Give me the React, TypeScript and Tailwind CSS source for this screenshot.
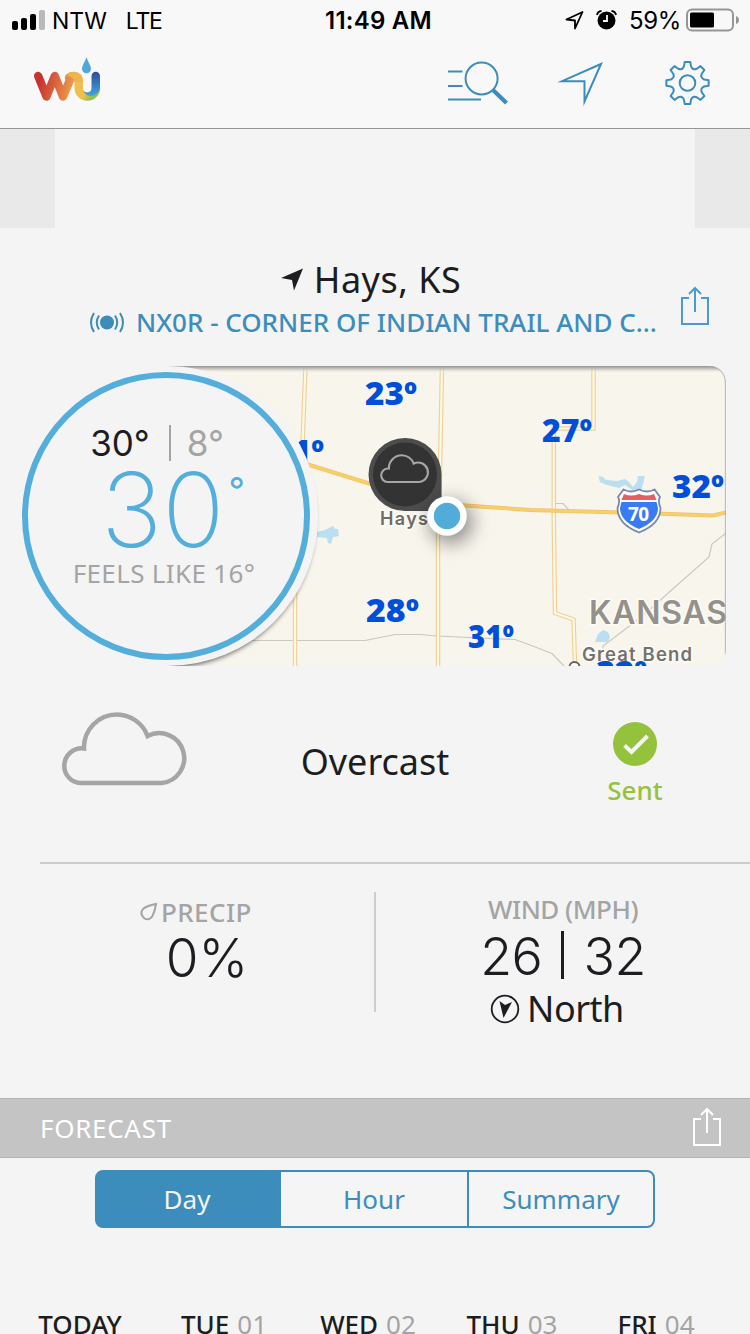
import type { ReactNode } from 'react';

const tabs = ['Day', 'Hour', 'Summary'];

const days = [
  { name: 'TODAY', date: '' },
  { name: 'TUE', date: '01' },
  { name: 'WED', date: '02' },
  { name: 'THU', date: '03' },
  { name: 'FRI', date: '04' },
];

const mapTemps = [
  { label: '1º', x: 292, y: 463, width: 32 },
  { label: '23º', x: 365, y: 404.5, width: 52 },
  { label: '27º', x: 542, y: 441.5, width: 50 },
  { label: '32º', x: 672, y: 497.5, width: 52 },
  { label: '28º', x: 366, y: 621.5, width: 53 },
  { label: '31º', x: 468, y: 647.5, width: 46 },
  { label: '32º', x: 596, y: 683.5, width: 51 },
];

const roads = [
  'M305.5 366L302.5 445L299 530L295 590V666',
  'M442 366L440 470L438 540V666',
  'M593.5 366V428.5H553.8V520L555 613L573.5 619.5L575 664',
];

const CLOUD =
  'M20.5 73H102A25 25 0 1 0 87.6 26A33 33 0 0 0 57 4.5A33 33 0 0 0 24 38.5A17.5 17.5 0 0 0 4.3 56A17 17 0 0 0 20.5 73Z';

function gearPath() {
  const p = (r: number, deg: number) => {
    const a = (deg * Math.PI) / 180;
    return `${(23.5 + r * Math.sin(a)).toFixed(2)} ${(23 - r * Math.cos(a)).toFixed(2)}`;
  };
  let d = '';
  for (let i = 0; i < 8; i++) {
    const a = i * 45;
    d += `${i === 0 ? 'M' : 'L'}${p(21.3, a - 7.5)}L${p(21.3, a + 7.5)}L${p(17, a + 12)}Q${p(13.6, a + 22.5)} ${p(17, a + 33)}`;
  }
  return d + 'Z';
}

function ShareIcon() {
  return (
    <svg className="h-10 w-[30px]" viewBox="0 0 30 40" fill="none" stroke="currentColor" strokeWidth="2">
      <path d="M9 13H2V39H28V13H21M15 27V2.5M9 9L15 3L21 9" />
    </svg>
  );
}

function Logo() {
  return (
    <svg className="h-[46px] w-[68px]" viewBox="33 56 68 46" fill="none">
      <defs>
        <linearGradient id="w" gradientUnits="userSpaceOnUse" x1="36" y1="80" x2="72" y2="88">
          <stop offset="0.1" stopColor="#c8322f" />
          <stop offset="0.55" stopColor="#d96540" />
          <stop offset="1" stopColor="#ec9a4c" />
        </linearGradient>
        <linearGradient id="u" gradientUnits="userSpaceOnUse" x1="66" y1="76" x2="98" y2="98">
          <stop offset="0" stopColor="#e29a3f" />
          <stop offset="0.3" stopColor="#f3bd4c" />
          <stop offset="0.66" stopColor="#efc04a" />
          <stop offset="0.85" stopColor="#8fc152" />
        </linearGradient>
        <linearGradient id="b" gradientUnits="userSpaceOnUse" x1="0" y1="72" x2="0" y2="96">
          <stop offset="0" stopColor="#2a4f9f" />
          <stop offset="1" stopColor="#43a5dd" />
        </linearGradient>
      </defs>
      <path d="M69 77.5Q71 76 74 76Q78.7 76.4 78.7 82V88A8.6 8.6 0 0 0 96 88" stroke="url(#u)" strokeWidth="8.4" strokeLinecap="round" />
      <path d="M38.2 76L46.5 96.5L54.8 76L63 96.5L70 80" stroke="url(#w)" strokeWidth="8.4" strokeLinecap="round" strokeLinejoin="round" />
      <path d="M68 73.5Q70.5 71.8 74 71.8Q82.9 72.5 82.9 82H74.5Q74 77 68 76Z" fill="#efb54a" />
      <path d="M83 89Q83.5 92.5 87.5 92.5Q91.5 92 91.5 88V76A4.2 4.2 0 0 1 100 76V88Q98 95.5 91 96Q84 95.5 83 89Z" fill="url(#b)" />
      <path d="M86.5 57C88 62 91 65.5 91 69A4.5 4.2 0 0 1 82 69C82 65.5 85 62 86.5 57Z" fill="#50a8d9" />
    </svg>
  );
}

function StatusBar() {
  return (
    <div className="flex h-10 items-center pt-0.5 font-['Inter',sans-serif] text-2xl text-black">
      <div className="flex w-[325px] items-center">
        <svg className="-mt-0.5 ml-3 h-5 w-[33px]" viewBox="0 0 33 20">
          <rect x="0" y="11" width="6" height="9" rx="2" />
          <rect x="9" y="8" width="6" height="12" rx="2" />
          <rect x="18" y="4" width="6" height="16" rx="2" />
          <rect x="27" y="0" width="6" height="20" rx="2" fill="#b9b9b9" />
        </svg>
        <span className="ml-[7px] text-[23px]">NTW</span>
        <span className="ml-[19px] text-[23px] tracking-[-1.2px]">LTE</span>
      </div>
      <span className="w-[240px] font-semibold tracking-[0.25px]">11:49 AM</span>
      <svg className="-mt-0.5 h-5 w-[19px]" viewBox="0 0 19 20" fill="none" stroke="currentColor" strokeWidth="1.8" strokeLinejoin="round">
        <path d="M17.5 2L1.5 9.5L10 10.5V18.5Z" />
      </svg>
      <svg className="-mt-0.5 ml-[12px] h-5 w-[21px]" viewBox="0 0 21 20">
        <circle cx="10.5" cy="10.5" r="9" />
        <path d="M1 5Q1.5 1.5 5.5 1M20 5Q19.5 1.5 15.5 1" fill="none" stroke="#000" strokeWidth="1.8" />
        <path d="M11 5V11H7" fill="none" stroke="#f8f8f8" strokeWidth="1.8" />
      </svg>
      <span className="ml-[12px] w-[57px] tracking-[-0.3px]">59%</span>
      <svg className="-mt-0.5 h-6 w-[54px]" viewBox="0 0 54 24">
        <rect x="1" y="1.5" width="46" height="21" rx="5" fill="none" stroke="#969696" strokeWidth="2" />
        <rect x="4" y="4.5" width="24" height="15" rx="1.5" />
        <path d="M50 8Q53 9 53 12Q53 15 50 16Z" fill="#969696" />
      </svg>
    </div>
  );
}

function Header() {
  return (
    <header className="h-[129px] border-b border-[#959595] bg-[#f8f8f8]">
      <StatusBar />
      <div className="flex text-[#3d8dbc]">
        <div className="ml-[33px] mt-4 w-[414px]">
          <Logo />
        </div>
        <svg className="mt-5 h-[46px] w-[62px]" viewBox="447 60 62 46" fill="none" stroke="currentColor" strokeWidth="2">
          <path d="M448 71.5H462.5M448 86H462.5M448 99.5H481" />
          <circle cx="481.6" cy="78.5" r="16" />
          <path d="M493 90L506.5 103" strokeWidth="4.2" />
        </svg>
        <svg className="ml-12 mt-5 h-[46px] w-[50px]" viewBox="557 60 50 46" fill="none" stroke="currentColor" strokeWidth="2">
          <path d="M601 64L562 81.2H584.5V101.5Z" strokeMiterlimit="10" />
        </svg>
        <svg className="ml-[57px] mt-5 h-[46px] w-[46px]" viewBox="0 0 46 46" fill="none" stroke="currentColor" strokeWidth="2">
          <path d={gearPath()} strokeLinejoin="round" />
          <circle cx="23.5" cy="23" r="7.8" />
        </svg>
      </div>
    </header>
  );
}

function Location() {
  return (
    <div className="flex pt-7">
      <div className="ml-[69px] w-[611px]">
        <div className="flex h-11 items-center justify-center pr-2 pt-[3px]">
          <svg className="mr-[10px] h-6 w-6 shrink-0" viewBox="0 0 24 24" fill="#1c1d21">
            <path d="M23 0.5L14 22.500L12 12L1 10Z" />
          </svg>
          <h1 className="text-4xl leading-[44px] tracking-[0.5px]">Hays, KS</h1>
        </div>
        <div className="flex h-11 items-center text-[#3d8dbc]">
          <svg className="ml-5 h-6 w-9 shrink-0" viewBox="0 0 36 24" fill="none" stroke="currentColor" strokeWidth="2">
            <circle cx="18" cy="12.5" r="7" fill="currentColor" stroke="none" />
            <path d="M5 3Q-1 12.5 5 22M10 5.5Q5.5 12.5 10 19.5M31 3Q37 12.5 31 22M26 5.5Q30.5 12.5 26 19.5" />
          </svg>
          <p className="ml-[11px] whitespace-nowrap text-[26px] font-medium">NX0R - CORNER OF INDIAN TRAIL AND C...</p>
        </div>
      </div>
      <div className="mt-[29px] text-[#4a9cc9]">
        <ShareIcon />
      </div>
    </div>
  );
}

function RadarMap() {
  return (
    <svg className="ml-[150px] h-[300px] w-[560px] rounded-r-2xl bg-[#f8f5ed]" viewBox="166 366 560 300" fill="none">
      <defs>
        <linearGradient id="edge" x1="0" y1="0" x2="0" y2="1">
          <stop offset="0" stopColor="#92918d" />
          <stop offset="0.5" stopColor="#c2c0b9" stopOpacity="0.7" />
          <stop offset="1" stopColor="#f8f5ed" stopOpacity="0" />
        </linearGradient>
        <filter id="soft" x="-50%" y="-50%" width="200%" height="200%">
          <feGaussianBlur stdDeviation="2.5" />
        </filter>
        <filter id="glow" x="-80%" y="-80%" width="260%" height="260%">
          <feGaussianBlur stdDeviation="9" />
        </filter>
      </defs>

      <g stroke="#cac8c2" strokeWidth="1.2">
        <path d="M220 640.5H365L395 634.5H420L437 636L515 639.5L530 645L552 653.5L564 666" />
        <path d="M726 533L712 544L709 557L640 618L603 646V650" />
        <path d="M554 503.5H563L568.5 509.5" />
      </g>
      <g fill="#b9dff1">
        <path d="M317 532L325 530L333 526L335 529H338L339 536L333 537L331 544L328 543L327 538L317 537Z" />
        <path d="M598.5 476L603 477L606 480L617 481L625 479L629 482L633 487L637 482L638 476H645L643 484L641 491H634L625 485L619 488L607 485L600 482Z" />
        <path d="M595 642L598 634L603 630L608 632L610 637L608 642Z" />
      </g>
      {roads.map((d) => (
        <g key={d}>
          <path d={d} stroke="#f0d09a" strokeWidth="4.5" />
          <path d={d} stroke="#fdf9e0" strokeWidth="2.2" />
        </g>
      ))}
      <path d="M300 462L369 483.5L435 503L465 505.5L530 510L640 513L713 515.5L726 512.5" stroke="#efc173" strokeWidth="4" />
      <path d="M300 462L369 483.5L435 503L465 505.5L530 510L640 513L713 515.5L726 512.5" stroke="#fad065" strokeWidth="2.6" />

      {/* interstate shield */}
      <path d="M623.5 489.5Q631 493.5 639 489.5Q647 493.5 654.5 489.5L660 497Q657.5 501 660.5 508Q660.5 524 639 532.5Q617.5 524 617.5 508Q620.5 501 618 497Z" fill="#fff" stroke="#7888ae" strokeWidth="1.8" />
      <path d="M624 494Q631 497 639 494Q647 497 654 494L656.5 500H621.5Z" fill="#eb5b5f" />
      <path d="M621.5 502H656.5Q657 504 658 508Q658 521 639 529Q620 521 620 508Z" fill="#397bf3" />
      <text x="628" y="520.5" textLength="21" fill="#fff" className="font-['Open_Sans',sans-serif] text-[19px] font-bold">70</text>

      <g className="font-['Inter',sans-serif] font-semibold" stroke="#fdfbf6" strokeWidth="3" paintOrder="stroke">
        <text x="380" y="524.5" textLength="48" fill="#6f6c67" className="text-[18px]">Hays</text>
        <text x="589" y="623.5" textLength="138" fill="#94918b" className="text-[32px]">KANSAS</text>
        <text x="582" y="660.5" textLength="110" fill="#75726c" className="text-[18.5px]">Great Bend</text>
      </g>
      <circle cx="574.5" cy="667" r="5" fill="#fff" stroke="#67645f" strokeWidth="2" />

      <g fill="#004fdb" className="font-['Noto_Sans',sans-serif] text-[32px] font-black">
        {mapTemps.map((t) => (
          <text key={`${t.x}-${t.y}`} x={t.x} y={t.y} textLength={t.width} lengthAdjust="spacingAndGlyphs">
            {t.label}
          </text>
        ))}
      </g>

      {/* station pin */}
      <path d="M405 438A36.3 36.3 0 1 0 405 511H441.5V474A36.3 36.3 0 0 0 405 438Z" fill="#4c4c4c" />
      <circle cx="405" cy="474.5" r="32" fill="#333" />
      <path d={CLOUD} transform="translate(379.5 453.5) scale(0.39)" stroke="#a6a6a6" strokeWidth="5.5" />
      <circle cx="451" cy="522" r="22" fill="#000" opacity="0.4" filter="url(#glow)" />
      <circle cx="447" cy="516" r="19.8" fill="#fff" />
      <circle cx="447" cy="516" r="13.2" fill="#52acd9" />

      <rect x="166" y="366" width="560" height="7" fill="url(#edge)" />
      <path d="M708 366.5Q725.5 366.5 725.5 384V655" stroke="#aaa9a4" strokeWidth="1.4" opacity="0.7" />
      <circle cx="167.5" cy="520" r="147.5" fill="#000" opacity="0.6" filter="url(#soft)" />
    </svg>
  );
}

function CurrentTemp() {
  return (
    <div className="absolute left-0 top-0 h-[300px] w-[302px] rounded-full bg-[#f4f4f4] p-[6px] pr-2">
      <div className="flex h-[288px] w-[288px] flex-col items-center rounded-full border-[6px] border-[#54aedb] pt-[42px]">
        <div className="flex h-[46px] items-center pr-[18px] font-['Inter',sans-serif] text-[35px]">
          <span>30°</span>
          <span className="ml-[19px] mr-4 h-9 w-0.5 bg-[#a4a4a4]" />
          <span className="text-[#a4a4a4]">8°</span>
        </div>
        <div className="flex h-[88px] pl-[14px] font-['Inter',sans-serif] text-[#54aedb]">
          <span className="-mt-[3px] text-[103px] font-extralight leading-[94px]">30</span>
          <span className="ml-1 text-4xl leading-[48px]">°</span>
        </div>
        <p className="pr-1 text-[26px] leading-[38px] tracking-[0.35px] text-[#a4a4a4]">FEELS LIKE 16°</p>
      </div>
    </div>
  );
}

function Conditions() {
  return (
    <div className="flex h-[196px]">
      <div className="w-[250px] shrink-0 pl-[60px] pt-11">
        <svg className="h-[78px] w-32" viewBox="0 0 128 78" fill="none" stroke="#a5a5a5" strokeWidth="4.5">
          <path d={CLOUD} />
        </svg>
      </div>
      <p className="w-[250px] shrink-0 pt-[71px] text-center text-4xl leading-[50px]">Overcast</p>
      <div className="ml-[85px] flex w-[100px] flex-col items-center pt-14 text-[#95c23d]">
        <svg className="h-11 w-11" viewBox="0 0 44 44">
          <circle cx="22" cy="22" r="22" fill="currentColor" />
          <path d="M11.5 23.5L18.5 30L34.5 14" fill="none" stroke="#f4f4f4" strokeWidth="4" />
        </svg>
        <span className="mt-1 text-[26px] font-medium leading-10">Sent</span>
      </div>
    </div>
  );
}

function Label({ children }: { children: ReactNode }) {
  return <span className="text-[26px] font-medium leading-9 text-[#a4a4a4]">{children}</span>;
}

function Stats() {
  return (
    <div className="flex h-[234px]">
      <div className="w-[374px] pt-[30px]">
        <div className="ml-[140px] flex items-center tracking-[0.4px]">
          <svg className="mr-[3px] h-5 w-[18px]" viewBox="0 0 18 20" fill="none" stroke="#a4a4a4" strokeWidth="2">
            <path d="M16 2Q15 9 12.5 14Q9 19 4.5 16.5Q-1 12 3 7Q6 4 16 2Z" />
          </svg>
          <Label>PRECIP</Label>
        </div>
        <p className="pl-10 pt-[3px] text-center font-['Inter',sans-serif] text-[53px] font-light leading-[50px]">0%</p>
      </div>
      <div className="mt-7 h-[120px] w-0.5 bg-[#cdcdcd]" />
      <div className="flex w-[374px] flex-col items-center pt-[27px] tracking-[-0.5px]">
        <Label>WIND (MPH)</Label>
        <div className="flex h-14 items-center font-['Inter',sans-serif] text-[52px] font-light">
          <span className="pt-[3px]">26</span>
          <span className="mx-[19px] h-12 w-[3px] bg-[#1c1d21]" />
          <span className="pt-[3px]">32</span>
        </div>
        <div className="flex h-[50px] items-center pr-3 pt-0.5">
          <svg className="mr-[7px] h-[30px] w-[30px]" viewBox="0 0 30 30">
            <circle cx="15" cy="15" r="13.3" fill="none" stroke="#1c1d21" strokeWidth="1.8" />
            <path d="M9.5 7L15 11L22 8L13.5 24Z" fill="#1c1d21" />
          </svg>
          <span className="text-4xl">North</span>
        </div>
      </div>
    </div>
  );
}

function Forecast() {
  return (
    <section>
      <div className="flex h-[60px] items-center justify-between border-y border-[#b4b4b4] bg-[#c4c4c4] pl-10 pr-7 text-white">
        <h2 className="text-[26px] tracking-[0.7px]">FORECAST</h2>
        <div className="mb-1">
          <ShareIcon />
        </div>
      </div>
      <div className="mx-auto mt-3 grid h-[58px] w-[560px] grid-cols-[184px_186px_186px] overflow-hidden rounded-lg border-2 border-[#3d8dbc] bg-[#3d8dbc]">
        {tabs.map((tab, i) => (
          <button
            key={tab}
            className={`pt-px text-[26px] ${
              i === 0 ? 'bg-[#3d8dbc] pr-1 text-[#f4f4f4]' : 'bg-[#f5f5f5] text-[#3d8dbc]'
            } ${i === 2 ? 'border-l-2 border-[#3d8dbc]' : ''}`}
          >
            {tab}
          </button>
        ))}
      </div>
      <div className="mt-[78px] flex pl-2">
        {days.map((day) => (
          <div key={day.name} className="w-36 text-center text-[26px] leading-9">
            <span className="font-medium">{day.name}</span>
            {day.date && <span className="ml-2 text-[#a4a4a4]">{day.date}</span>}
          </div>
        ))}
      </div>
    </section>
  );
}

export default function App() {
  return (
    <div className="h-[1334px] w-[750px] overflow-hidden bg-[#f4f4f4] font-['Noto_Sans',sans-serif] text-[#1c1d21]">
      <Header />
      <div className="flex h-[99px] justify-between">
        <div className="w-[55px] bg-[#e9e9e9]" />
        <div className="w-[55px] bg-[#e9e9e9]" />
      </div>
      <Location />
      <div className="relative ml-4 mt-[22px] h-[300px] w-[710px]">
        <RadarMap />
        <CurrentTemp />
      </div>
      <Conditions />
      <div className="ml-10 h-0.5 bg-[#cdcdcd]" />
      <Stats />
      <Forecast />
    </div>
  );
}
